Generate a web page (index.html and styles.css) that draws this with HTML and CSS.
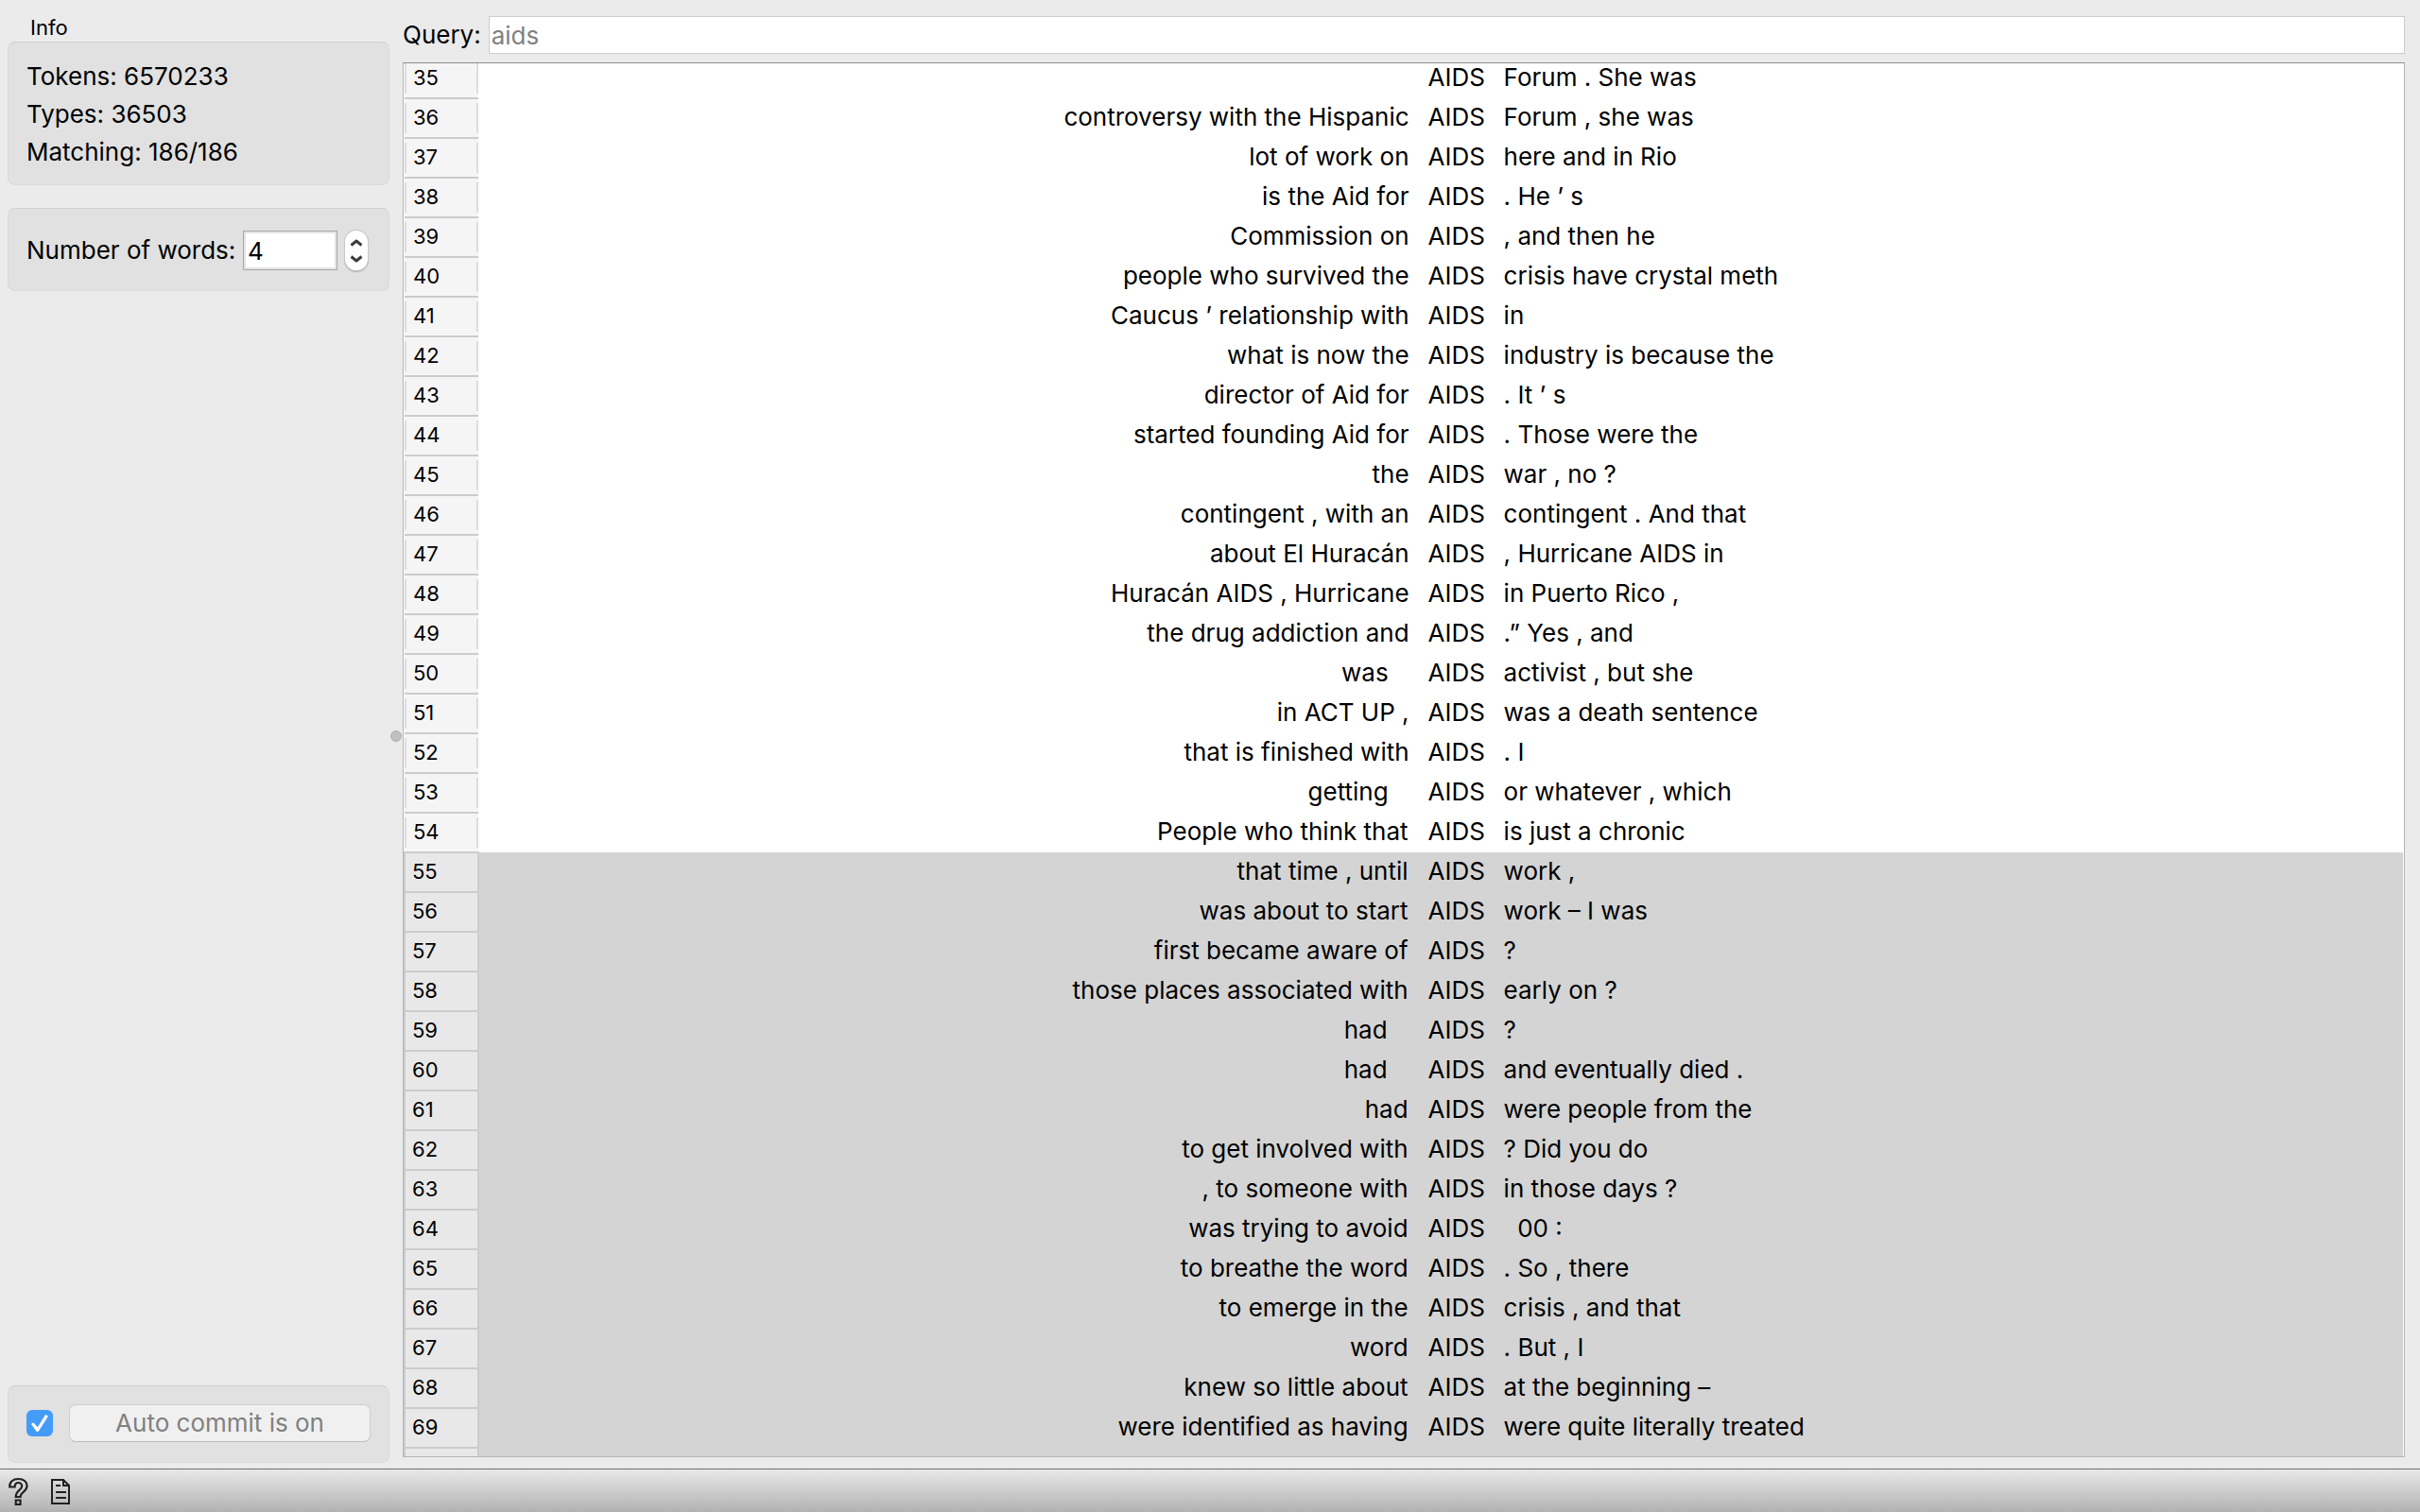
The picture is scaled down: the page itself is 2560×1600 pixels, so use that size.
FILE: index.html
```html
<!DOCTYPE html>
<html lang="en">
<head>
<meta charset="utf-8">
<title>Concordance</title>
<link rel="stylesheet" href="styles.css">
</head>
<body>
<div class="window">
  <aside class="controls">
    <section class="info">
      <h2 class="group-title">Info</h2>
      <div class="group">
        <p class="line">Tokens: 6570233</p>
        <p class="line">Types: 36503</p>
        <p class="line">Matching: 186/186</p>
      </div>
    </section>
    <section class="group words">
      <label for="words">Number of words:</label>
      <input class="words-input" id="words" type="text" inputmode="numeric" value="4">
      <button class="stepper" type="button" aria-label="Change number of words">
        <svg width="24" height="42" viewBox="0 0 24 42" fill="none" stroke="#3c3c3c" stroke-width="3" stroke-linejoin="round"><path d="M6.500 15.500 12 11l5.500 4.500M6.500 27.500 12 32l5.500-4.500"/></svg>
      </button>
    </section>
    <section class="group commit">
      <input class="commit-check" type="checkbox" aria-label="Auto commit" checked>
      <button class="commit-button" type="button">Auto commit is on</button>
    </section>
  </aside>
  <div class="splitter"><span class="handle"></span></div>
  <main class="results">
    <div class="query">
      <label for="query">Query:</label>
      <input class="query-input" id="query" type="text" value="aids">
    </div>
    <div class="table-view">
      <table class="concordances">
        <colgroup><col class="col-number"><col class="col-left"><col class="col-word"><col></colgroup>
        <tbody>
          <tr><th scope="row"><span>35</span></th><td></td><td>AIDS</td><td>Forum . She was</td></tr>
          <tr><th scope="row"><span>36</span></th><td>controversy with the Hispanic</td><td>AIDS</td><td>Forum , she was</td></tr>
          <tr><th scope="row"><span>37</span></th><td>lot of work on</td><td>AIDS</td><td>here and in Rio</td></tr>
          <tr><th scope="row"><span>38</span></th><td>is the Aid for</td><td>AIDS</td><td>. He ’ s</td></tr>
          <tr><th scope="row"><span>39</span></th><td>Commission on</td><td>AIDS</td><td>, and then he</td></tr>
          <tr><th scope="row"><span>40</span></th><td>people who survived the</td><td>AIDS</td><td>crisis have crystal meth</td></tr>
          <tr><th scope="row"><span>41</span></th><td>Caucus ’ relationship with</td><td>AIDS</td><td>in</td></tr>
          <tr><th scope="row"><span>42</span></th><td>what is now the</td><td>AIDS</td><td>industry is because the</td></tr>
          <tr><th scope="row"><span>43</span></th><td>director of Aid for</td><td>AIDS</td><td>. It ’ s</td></tr>
          <tr><th scope="row"><span>44</span></th><td>started founding Aid for</td><td>AIDS</td><td>. Those were the</td></tr>
          <tr><th scope="row"><span>45</span></th><td>the</td><td>AIDS</td><td>war , no ?</td></tr>
          <tr><th scope="row"><span>46</span></th><td>contingent , with an</td><td>AIDS</td><td>contingent . And that</td></tr>
          <tr><th scope="row"><span>47</span></th><td>about El Huracán</td><td>AIDS</td><td>, Hurricane AIDS in</td></tr>
          <tr><th scope="row"><span>48</span></th><td>Huracán AIDS , Hurricane</td><td>AIDS</td><td>in Puerto Rico ,</td></tr>
          <tr><th scope="row"><span>49</span></th><td>the drug addiction and</td><td>AIDS</td><td>.” Yes , and</td></tr>
          <tr><th scope="row"><span>50</span></th><td>was   </td><td>AIDS</td><td>activist , but she</td></tr>
          <tr><th scope="row"><span>51</span></th><td>in ACT UP ,</td><td>AIDS</td><td>was a death sentence</td></tr>
          <tr><th scope="row"><span>52</span></th><td>that is finished with</td><td>AIDS</td><td>. I</td></tr>
          <tr><th scope="row"><span>53</span></th><td>getting   </td><td>AIDS</td><td>or whatever , which</td></tr>
          <tr><th scope="row"><span>54</span></th><td>People who think that</td><td>AIDS</td><td>is just a chronic</td></tr>
        </tbody>
        <tbody class="selected">
          <tr><th scope="row"><span>55</span></th><td>that time , until</td><td>AIDS</td><td>work ,</td></tr>
          <tr><th scope="row"><span>56</span></th><td>was about to start</td><td>AIDS</td><td>work – I was</td></tr>
          <tr><th scope="row"><span>57</span></th><td>first became aware of</td><td>AIDS</td><td>?</td></tr>
          <tr><th scope="row"><span>58</span></th><td>those places associated with</td><td>AIDS</td><td>early on ?</td></tr>
          <tr><th scope="row"><span>59</span></th><td>had   </td><td>AIDS</td><td>?</td></tr>
          <tr><th scope="row"><span>60</span></th><td>had   </td><td>AIDS</td><td>and eventually died .</td></tr>
          <tr><th scope="row"><span>61</span></th><td>had</td><td>AIDS</td><td>were people from the</td></tr>
          <tr><th scope="row"><span>62</span></th><td>to get involved with</td><td>AIDS</td><td>? Did you do</td></tr>
          <tr><th scope="row"><span>63</span></th><td>, to someone with</td><td>AIDS</td><td>in those days ?</td></tr>
          <tr><th scope="row"><span>64</span></th><td>was trying to avoid</td><td>AIDS</td><td>  00 :</td></tr>
          <tr><th scope="row"><span>65</span></th><td>to breathe the word</td><td>AIDS</td><td>. So , there</td></tr>
          <tr><th scope="row"><span>66</span></th><td>to emerge in the</td><td>AIDS</td><td>crisis , and that</td></tr>
          <tr><th scope="row"><span>67</span></th><td>word</td><td>AIDS</td><td>. But , I</td></tr>
          <tr><th scope="row"><span>68</span></th><td>knew so little about</td><td>AIDS</td><td>at the beginning –</td></tr>
          <tr><th scope="row"><span>69</span></th><td>were identified as having</td><td>AIDS</td><td>were quite literally treated</td></tr>
          <tr><th></th><td></td><td></td><td></td></tr>
        </tbody>
      </table>
    </div>
  </main>
</div>
<footer class="statusbar">
  <button class="icon-button" type="button" aria-label="Help">
    <svg width="24" height="32" viewBox="0 0 24 32" fill="none" stroke="#231f20" stroke-width="2"><path d="M3 10.500C2.500 5 6.500 2 11.500 2S20 5 20 9.500c0 6-6.500 6.500-6.500 11.500H9c0-7 6-7 6-11.500 0-2-1.500-3.500-3.500-3.500S8 7.500 8 10.500zM9 24.500h4.500V29H9z" transform="translate(-1 0)scale(1.080 1)"/></svg>
  </button>
  <button class="icon-button" type="button" aria-label="Report">
    <svg width="24" height="32" viewBox="0 0 24 32" fill="none" stroke="#231f20" stroke-width="2"><path d="M3 3h12l6 6v19H3zM15 3v6h6M7 9h5M7 16h11M7 22h11"/></svg>
  </button>
</footer>
</body>
</html>
```
FILE: styles.css
```css
* { box-sizing: border-box; }

body {
  margin: 0;
  height: 100vh;
  display: flex;
  flex-direction: column;
  background: #ebebeb;
  color: #000;
  font: 26px/40px Inter, "Liberation Sans", sans-serif;
}

button, input { font: inherit; margin: 0; }

.window {
  flex: 1;
  min-height: 0;
  display: flex;
  padding: 0 16px 6px 8px;
}

.controls {
  width: 404px;
  display: flex;
  flex-direction: column;
  gap: 24px;
  padding-top: 14px;
}

.group-title {
  margin: 0;
  padding-left: 24px;
  font-size: 22px;
  font-weight: 400;
  line-height: 30px;
}

.group {
  padding: 16px 19px 14px;
  border: 1px solid #dadada;
  border-top-color: #d0d0d0;
  border-radius: 8px;
  background: #e1e1e1;
}

.line { margin: 0; }

.words {
  display: flex;
  align-items: center;
  height: 88px;
}

.words-input {
  width: 100px;
  height: 42px;
  margin-left: auto;
  padding: 0 4px;
  border: 1px solid #a8a8a8;
  box-shadow: inset 0 0 0 2px #e4e4e4;
  background: #fff;
}

.stepper {
  width: 24px;
  height: 42px;
  margin: 0 3px 0 8px;
  padding: 0;
  border: 0;
  border-radius: 12px;
  background: #fff;
  box-shadow: 0 0 0 1px #c9c9c9, 0 1px 1px 1px #b4b4b4;
}

.stepper svg, .icon-button svg { display: block; }

.commit {
  display: flex;
  align-items: center;
  gap: 17px;
  height: 82px;
  margin-top: auto;
  padding: 14px 19px 16px;
}

.commit-check {
  appearance: none;
  width: 28px;
  height: 28px;
  border-radius: 6px;
  background: #459cf7;
  display: grid;
  place-items: center;
}

.commit-check::before {
  content: "";
  width: 18px;
  height: 18px;
  background: #fff;
  clip-path: polygon(0 56%, 12% 46%, 38% 74%, 84% 0, 100% 8%, 42% 100%, 32% 100%);
}

.commit-button {
  flex: 1;
  height: 40px;
  padding: 0;
  border: 1px solid #cecece;
  border-bottom-color: #bcbcbc;
  border-radius: 7px;
  background: #f0f0f0;
  color: #808080;
  line-height: 36px;
}

.splitter {
  width: 14px;
  display: flex;
  align-items: center;
  justify-content: center;
  padding-top: 10px;
}

.handle {
  width: 12px;
  height: 12px;
  border-radius: 50%;
  border: 1px solid #b0b0b0;
  background: #c0c0c0;
}

.results {
  flex: 1;
  min-width: 0;
  display: flex;
  flex-direction: column;
  gap: 9px;
  padding: 17px 0 6px;
}

.query {
  display: flex;
  align-items: center;
  gap: 8px;
}

.query-input {
  flex: 1;
  min-width: 0;
  height: 40px;
  padding: 1px 2px 0;
  border: 1px solid #cdcdcd;
  background: #fff;
  color: #808080;
}

.table-view {
  flex: 1;
  min-height: 0;
  overflow: hidden;
  border: 1px solid #b4b4b4;
  border-top-color: #8c8c8c;
  background: #fff;
}

.concordances {
  width: 100%;
  margin-top: -5px;
  border-collapse: collapse;
  table-layout: fixed;
}

.col-number { width: 78px; }
.col-left { width: 47%; }
.col-word { width: 80px; }

.concordances tr { height: 42px; }

.concordances th {
  padding: 0;
  background: #f5f5f5;
  border-bottom: 2px solid #cccccc;
  font-size: 22px;
  font-weight: 400;
  line-height: 30px;
  text-align: left;
}

.concordances th span {
  display: block;
  padding: 0 0 2px 7px;
  border: solid #dcdcdc;
  border-width: 0 2px;
}

.concordances td {
  padding: 0 9px 2px 11px;
  line-height: 38px;
  white-space: pre;
}

.concordances td:nth-child(2) { text-align: right; }

.selected { background: #d4d4d4; }

.concordances .selected th {
  background: #e8e8e8;
  border-right: 2px solid #cccccc;
  border-left: 2px solid #cccccc;
}

.selected th span { border: 0; }

.statusbar {
  display: flex;
  gap: 20px;
  height: 46px;
  padding: 8px;
  border-top: 1px solid #6e6e6e;
  background: linear-gradient(#e8e8e8, #b2b2b2);
}

.icon-button {
  padding: 0;
  border: 0;
  background: none;
}
```
